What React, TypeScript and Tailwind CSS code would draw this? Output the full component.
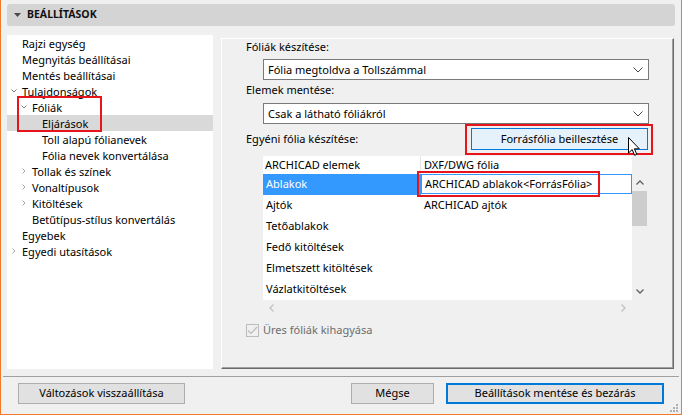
import React from "react";

const FONT = "font-['Noto_Sans',_'Open_Sans',sans-serif]";

type Item = { t: string; l: 1 | 2 | 3; c?: "down" | "right"; sel?: boolean };

const tree: Item[] = [
  { t: "Rajzi egység", l: 1 },
  { t: "Megnyitás beállításai", l: 1 },
  { t: "Mentés beállításai", l: 1 },
  { t: "Tulajdonságok", l: 1, c: "down" },
  { t: "Fóliák", l: 2, c: "down" },
  { t: "Eljárások", l: 3, sel: true },
  { t: "Toll alapú fólianevek", l: 3 },
  { t: "Fólia nevek konvertálása", l: 3 },
  { t: "Tollak és színek", l: 2, c: "right" },
  { t: "Vonaltípusok", l: 2, c: "right" },
  { t: "Kitöltések", l: 2, c: "right" },
  { t: "Betűtípus-stílus konvertálás", l: 2 },
  { t: "Egyebek", l: 1 },
  { t: "Egyedi utasítások", l: 1, c: "right" },
];

const levelPad: Record<number, string> = { 1: "pl-0", 2: "pl-[10px]", 3: "pl-[20px]" };

function ChevDown() {
  return (
    <svg width="6" height="4" viewBox="0 0 6 4" className="ml-[4px]">
      <path d="M0.5 0.5 L3 3 L5.5 0.5" fill="none" stroke="#7a7a7a" strokeWidth="1" />
    </svg>
  );
}
function ChevRight() {
  return (
    <svg width="4" height="6" viewBox="0 0 4 6" className="ml-[5px]">
      <path d="M0.5 0.5 L3 3 L0.5 5.5" fill="none" stroke="#a6a6a6" strokeWidth="1" />
    </svg>
  );
}

function Dropdown({ text }: { text: string }) {
  return (
    <div className="ml-[17px] w-[386px] h-[21px] bg-white border border-[#7a7a7a] flex items-center pl-[4px] pr-[5px]">
      <span className="flex-1 text-[11px] text-black leading-none">{text}</span>
      <svg width="10" height="6" viewBox="0 0 10 6">
        <path d="M0.5 0.5 L5 5 L9.5 0.5" fill="none" stroke="#444" strokeWidth="1" />
      </svg>
    </div>
  );
}

const rows = ["Ablakok", "Ajtók", "Tetőablakok", "Fedő kitöltések", "Elmetszett kitöltések", "Vázlatkitöltések"];
const col2: Record<string, string> = { Ajtók: "ARCHICAD ajtók" };

export default function App() {
  return (
    <div className={`${FONT} relative w-[682px] h-[415px] bg-[#f0f0f0] border-l border-r border-b border-[#f07a2a] flex flex-col overflow-hidden`}>
      {/* header */}
      <div className="mt-[4px] mx-[6px] h-[22px] rounded-[3px] bg-[#d4d4d4] flex items-center">
        <svg width="7" height="4" viewBox="0 0 7 4" className="ml-[7px]">
          <path d="M0 0 L7 0 L3.5 4 Z" fill="#4a4a4a" />
        </svg>
        <span className="ml-[6px] text-[10.5px] font-bold text-[#111]">BEÁLLÍTÁSOK</span>
      </div>

      {/* body */}
      <div className="mt-[9px] ml-[6px] mr-[7px] flex h-[334px]">
        {/* tree */}
        <div className="relative w-[206px] h-[334px] bg-white">
          {tree.map((it, i) => (
            <div
              key={i}
              className={`h-[16px] flex items-center ${levelPad[it.l]} ${it.sel ? "bg-[#d9d9d9]" : ""}`}
            >
              <div className="w-[15px] flex items-center">
                {it.c === "down" ? <ChevDown /> : it.c === "right" ? <ChevRight /> : null}
              </div>
              <span className="text-[11px] text-black leading-none">{it.t}</span>
            </div>
          ))}
          <div className="absolute left-[10px] top-[61px] w-[85px] h-[36px] border-2 border-[#e8141c]" />
        </div>

        {/* right panel */}
        <div className="ml-[8px] mt-[3px] w-[453px] h-[331px] border border-t-white border-l-white border-r-[#6a6a6a] border-b-[#6a6a6a] shadow-[inset_-1px_-1px_0_#a0a0a0] flex flex-col pl-[24px]">
          <div className="h-[16px] flex items-center text-[11px] text-black">Fóliák készítése:</div>
          <div className="mt-[4px]">
            <Dropdown text="Fólia megtoldva a Tollszámmal" />
          </div>
          <div className="mt-[2px] h-[16px] flex items-center text-[11px] text-black">Elemek mentése:</div>
          <div className="mt-[5px]">
            <Dropdown text="Csak a látható fóliákról" />
          </div>
          <div className="h-[31px] flex items-center">
            <span className="flex-1 text-[11px] text-black">Egyéni fólia készítése:</span>
            <div className="mr-[20px] w-[188px] h-[31px] border-2 border-[#e8141c] pl-[4px] pr-[3px] pt-[2px] pb-[3px]">
              <div className="w-full h-full bg-[#e5f1fb] border border-[#0078d7] flex items-center justify-center text-[11px] text-black">
                Forrásfólia beillesztése
              </div>
            </div>
          </div>

          {/* table */}
          <div className="mt-[1px] ml-[17px] flex">
            <div className="relative w-[369px] h-[144px] bg-white flex flex-col">
              <div className="h-[18px] flex text-[11px] text-black">
                <div className="w-[158px] pl-[2px] flex items-center border-r border-[#e5e5e5]">ARCHICAD elemek</div>
                <div className="flex-1 pl-[3px] flex items-center">DXF/DWG fólia</div>
              </div>
              {rows.map((r, i) => (
                <div key={r} className="h-[21px] flex text-[11px]">
                  <div className={`w-[158px] pl-[3px] flex items-center ${i === 0 ? "bg-[#3399ff] text-white" : "text-black"}`}>{r}</div>
                  {i === 0 ? (
                    <div className="w-[211px] h-[20px] border border-[#3399ff] pl-[3px] flex items-center text-black">
                      ARCHICAD ablakok&lt;ForrásFólia&gt;
                    </div>
                  ) : (
                    <div className="flex-1 pl-[3px] flex items-center text-black">{col2[r] ?? ""}</div>
                  )}
                </div>
              ))}
              <div className="absolute left-[154px] top-[15px] w-[183px] h-[26px] border-2 border-[#e8141c]" />
            </div>
            {/* vertical scrollbar */}
            <div className="w-[15px] mt-[18px] h-[126px] flex flex-col items-center">
              <div className="h-[17px] flex items-center justify-center">
                <svg width="8" height="5" viewBox="0 0 8 5">
                  <path d="M0.5 4.5 L4 1 L7.5 4.5" fill="none" stroke="#606060" strokeWidth="1.3" />
                </svg>
              </div>
              <div className="w-[15px] h-[35px] bg-[#cdcdcd]" />
              <div className="flex-1" />
              <div className="h-[17px] flex items-center justify-center">
                <svg width="8" height="5" viewBox="0 0 8 5">
                  <path d="M0.5 0.5 L4 4 L7.5 0.5" fill="none" stroke="#606060" strokeWidth="1.3" />
                </svg>
              </div>
            </div>
          </div>
          {/* horizontal scroll arrows */}
          <div className="ml-[17px] w-[369px] h-[15px] flex items-center justify-between px-[6px]">
            <svg width="5" height="8" viewBox="0 0 5 8">
              <path d="M4.5 0.5 L1 4 L4.5 7.5" fill="none" stroke="#c2c2c2" strokeWidth="1.3" />
            </svg>
            <svg width="5" height="8" viewBox="0 0 5 8">
              <path d="M0.5 0.5 L4 4 L0.5 7.5" fill="none" stroke="#c2c2c2" strokeWidth="1.3" />
            </svg>
          </div>
          {/* checkbox */}
          <div className="mt-[7px] h-[16px] flex items-center">
            <div className="w-[13px] h-[13px] border border-[#bcbcbc] bg-[#f0f0f0] flex items-center justify-center">
              <svg width="11" height="9" viewBox="0 0 11 9">
                <path d="M1 4.5 L4 7.5 L10 1" fill="none" stroke="#bcbcbc" strokeWidth="1.2" />
              </svg>
            </div>
            <span className="ml-[4px] text-[11px] text-[#6d6d6d]">Üres fóliák kihagyása</span>
          </div>
        </div>
      </div>

      {/* separator */}
      <div className="mt-[7px] ml-[2px] mr-[2px] h-px bg-[#a0a0a0]" />

      {/* buttons */}
      <div className="mt-[6px] flex">
        <button className="ml-[17px] w-[167px] h-[21px] bg-[#e1e1e1] border border-[#adadad] text-[11px] text-black flex items-center justify-center">
          Változások visszaállítása
        </button>
        <button className="ml-[166px] w-[83px] h-[21px] bg-[#e1e1e1] border border-[#adadad] text-[11px] text-black flex items-center justify-center">
          Mégse
        </button>
        <button className="ml-[12px] w-[218px] h-[21px] bg-[#e1e1e1] border-2 border-[#0078d7] text-[11px] text-black flex items-center justify-center">
          Beállítások mentése és bezárás
        </button>
      </div>

      {/* resize grip */}
      <svg width="9" height="9" viewBox="0 0 9 9" className="absolute right-[3px] bottom-[2px]">
        <rect x="7" y="1" width="2" height="2" fill="#b0b0b0" />
        <rect x="4" y="4" width="2" height="2" fill="#b0b0b0" />
        <rect x="7" y="4" width="2" height="2" fill="#b0b0b0" />
        <rect x="1" y="7" width="2" height="2" fill="#b0b0b0" />
        <rect x="4" y="7" width="2" height="2" fill="#b0b0b0" />
        <rect x="7" y="7" width="2" height="2" fill="#b0b0b0" />
      </svg>

      {/* mouse cursor */}
      <svg width="13" height="20" viewBox="0 0 13 20" className="absolute left-[627px] top-[137px]">
        <path d="M0.5 0.5 L0.5 16 L4.2 12.6 L6.6 18.3 L8.8 17.4 L6.4 11.8 L11.3 11.8 Z" fill="white" stroke="black" strokeWidth="1" strokeLinejoin="miter" />
      </svg>
    </div>
  );
}
